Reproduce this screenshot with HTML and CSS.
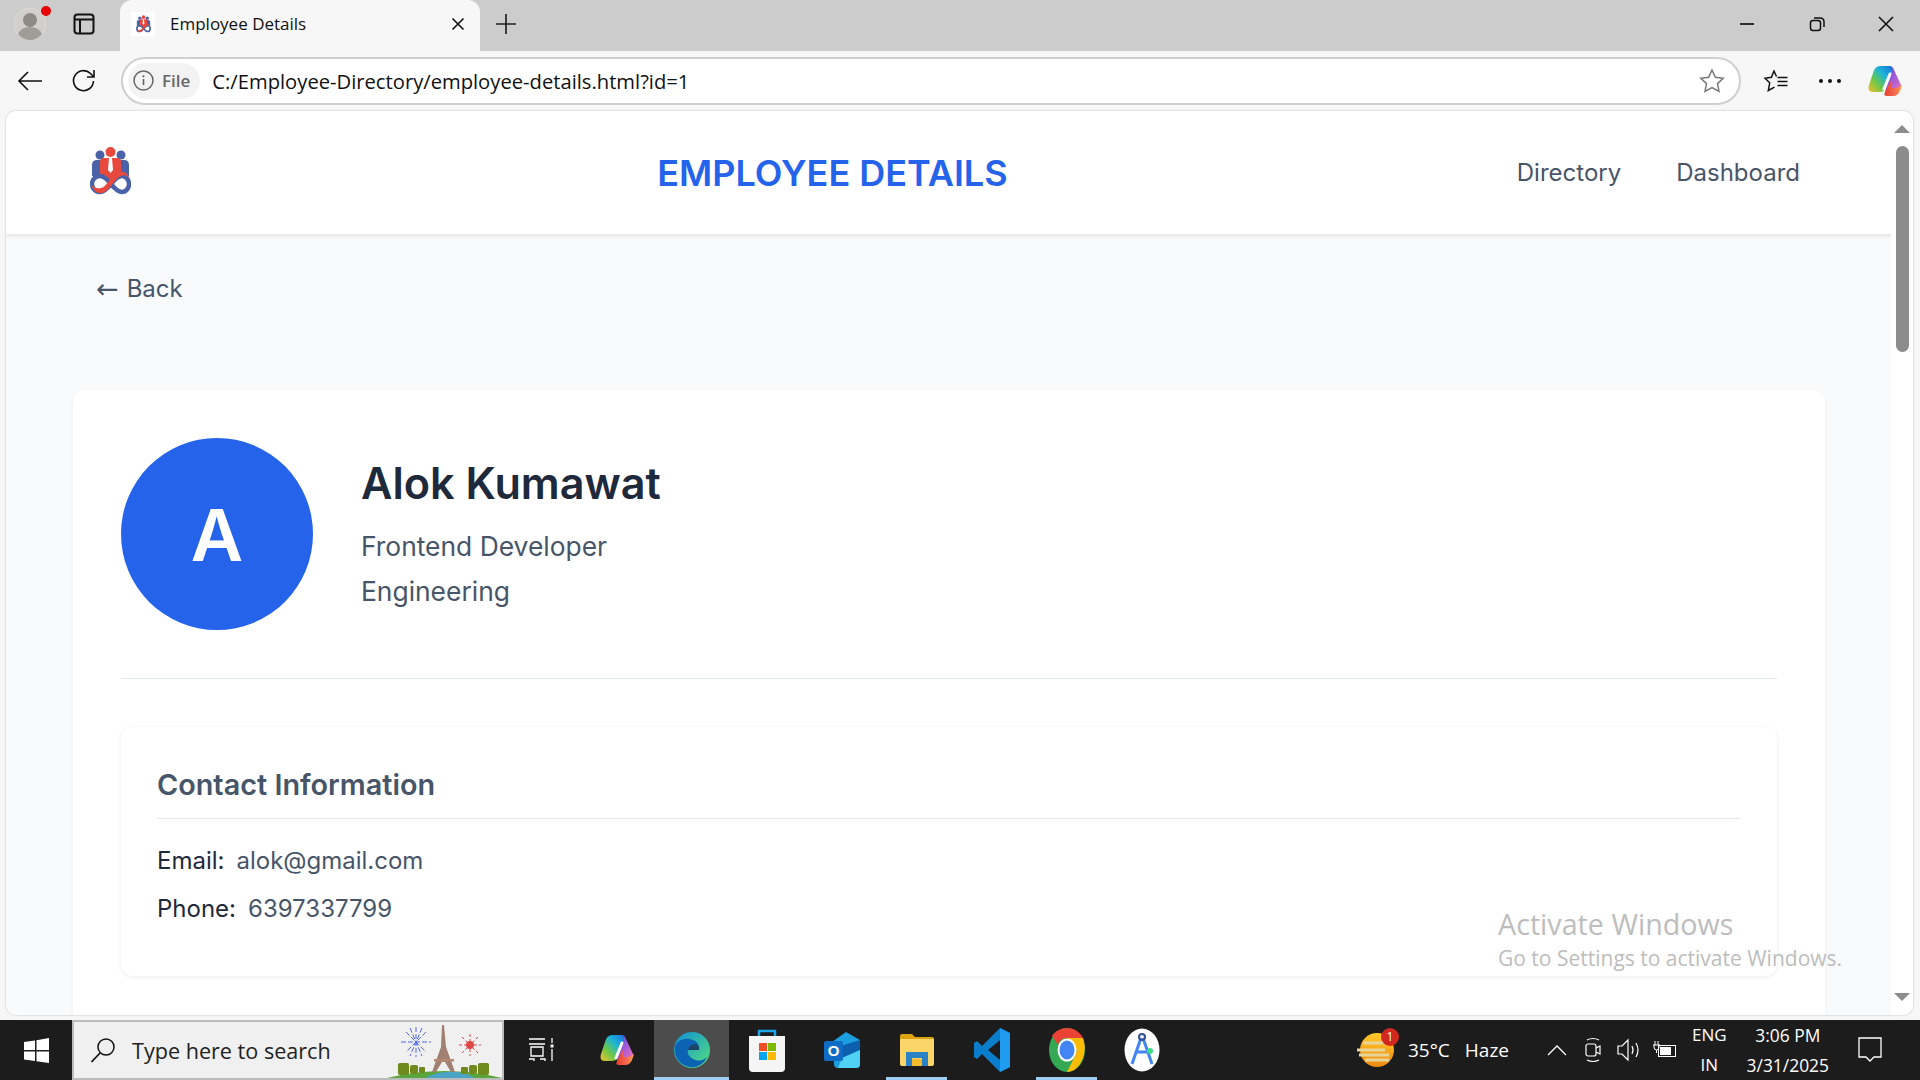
FILE: index.html
```html
<!DOCTYPE html>
<html lang="en">
<head>
  <meta charset="UTF-8">
  <meta name="viewport" content="width=device-width, initial-scale=1.0">
  <title>Employee Details</title>
  <link rel="stylesheet" href="styles.css">
</head>
<body>
  <svg class="defs" width="0" height="0">
    <defs>
      <symbol id="logo" viewBox="0 0 41 50">
        <circle cx="10" cy="9" r="4.500" fill="#4a63a8"/>
        <circle cx="31" cy="9" r="4.500" fill="#4a63a8"/>
        <path d="M2 30V19q0-5 5-5h6v18zM39 30V19q0-5-5-5h-6v18z" fill="#4a63a8"/>
        <circle cx="20.500" cy="6" r="5" fill="#e8493c"/>
        <path d="M10 30V16q0-4 4-4h13q4 0 4 4v12l-10 6z" fill="#e8493c"/>
        <path d="M19 12h3l1 12-2.500 3-2.500-3z" fill="#fff"/>
        <path d="M21 38c-4-5-7-8-11-8-5 0-8 4-8 8s3 8 8 8c4 0 7-3 11-8s7-8 11-8 7 4 7 8-3 8-7 8c-4 0-7-3-11-8z" fill="none" stroke="#4a63a8" stroke-width="4.500"/>
        <path d="M1 38c2 6 6 10 11 9 7-1 12-14 19-17 4-2 7 0 9 3-2-6-7-9-12-7-7 3-11 15-17 16-5 1-8-1-10-4z" fill="#e8493c"/>
      </symbol>
      <symbol id="copilot" viewBox="0 0 34 32">
        <defs>
          <linearGradient id="copA" x1="1" y1="0" x2="0" y2="1">
            <stop offset="0" stop-color="#1a6fe0"/>
            <stop offset=".35" stop-color="#1cb4d8"/>
            <stop offset=".65" stop-color="#6cc84a"/>
            <stop offset="1" stop-color="#f5c02a"/>
          </linearGradient>
          <linearGradient id="copB" x1="0" y1="0" x2="1" y2="1">
            <stop offset="0" stop-color="#2a50d8"/>
            <stop offset=".5" stop-color="#a458d8"/>
            <stop offset="1" stop-color="#e878b8"/>
          </linearGradient>
          <linearGradient id="copC" x1="0" y1="0" x2="1" y2="0">
            <stop offset="0" stop-color="#e8402c"/>
            <stop offset=".6" stop-color="#f46a50"/>
            <stop offset="1" stop-color="#fba84a"/>
          </linearGradient>
        </defs>
        <path d="M21 1q4 0 5 4l7 15q1 5-4 6h-7l-5 0 6-17q1-5-4-8z" fill="url(#copB)"/>
        <path d="M12 1h9q4 0 3 4L17 24q-1 3-5 3H5q-6 0-4-7L5 8q2-7 7-7z" fill="url(#copA)"/>
        <path d="M24 14l-7 13q-2 4 2 4h6q5 0 7-5l2-6-5 3h-6z" fill="url(#copC)"/>
        <path d="M22 9l-6 15" stroke="#fff" stroke-width="3" stroke-linecap="round"/>
      </symbol>
    </defs>
  </svg>

  <div class="tabbar">
    <div class="profile">
      <svg width="34" height="34" viewBox="0 0 34 34">
        <circle cx="17" cy="17" r="16" fill="#d2d0cc" stroke="#dedcd8"/>
        <circle cx="17" cy="13" r="7" fill="#8d8a85"/>
        <path d="M5 27q3-7 12-7t12 7q-5 6-12 6t-12-6z" fill="#a09d98"/>
      </svg>
      <span class="profile-dot"></span>
    </div>
    <div class="bar-btn">
      <svg width="22" height="22" viewBox="0 0 22 22" fill="none" stroke="#111" stroke-width="2">
        <rect x="1.500" y="1.500" width="19" height="19" rx="3"/>
        <path d="M1.500 6.500h19M7 6.500v14" />
      </svg>
    </div>
    <div class="tab">
      <span class="tab-fav"><svg width="15" height="18"><use href="#logo"/></svg></span>
      <span class="tab-title">Employee Details</span>
      <svg class="tab-close" width="14" height="14" viewBox="0 0 14 14" stroke="#111" stroke-width="1.600"><path d="M1.500 1.500l11 11M12.500 1.500l-11 11"/></svg>
    </div>
    <div class="bar-btn new-tab">
      <svg width="22" height="22" viewBox="0 0 22 22" stroke="#222" stroke-width="1.700"><path d="M11 1v20M1 11h20"/></svg>
    </div>
    <div class="win-btns">
      <svg width="16" height="16" viewBox="0 0 16 16" stroke="#111" stroke-width="1.700"><path d="M1 8h14"/></svg>
      <svg width="16" height="16" viewBox="0 0 16 16" fill="none" stroke="#111" stroke-width="1.500"><rect x="1.500" y="4.500" width="10" height="10" rx="2.500"/><path d="M5 2h6q4 0 4 4v5"/></svg>
      <svg width="16" height="16" viewBox="0 0 16 16" stroke="#111" stroke-width="1.600"><path d="M1 1l14 14M15 1L1 15"/></svg>
    </div>
  </div>

  <div class="toolbar">
    <svg class="tool-icon" width="26" height="22" viewBox="0 0 26 22" fill="none" stroke="#111" stroke-width="1.600"><path d="M25 11H2M11 2l-9 9 9 9"/></svg>
    <svg class="tool-icon" width="26" height="26" viewBox="0 0 26 26" fill="none" stroke="#111" stroke-width="1.600"><path d="M22.500 13a10 10 0 1 1-3-7.500l3 3M23 2v7h-7"/></svg>
    <div class="address">
      <span class="site-chip">
        <svg width="21" height="21" viewBox="0 0 21 21"><circle cx="10.500" cy="10.500" r="9.500" fill="none" stroke="#666" stroke-width="1.500"/><path d="M10.500 9v6" stroke="#666" stroke-width="1.600"/><circle cx="10.500" cy="6.300" r="1.100" fill="#666"/></svg>
        File
      </span>
      <span class="url">C:/Employee-Directory/employee-details.html?id=1</span>
      <svg class="star" width="26" height="25" viewBox="0 0 26 25" fill="none" stroke="#777" stroke-width="1.500"><path d="M13 2l3.400 7.200 7.800 1-5.700 5.400 1.500 7.800-7-3.900-7 3.900 1.500-7.800L1.800 10.200l7.800-1z"/></svg>
    </div>
    <svg class="fav-list" width="26" height="24" viewBox="0 0 26 24" fill="none" stroke="#111" stroke-width="1.500"><path d="M13.500 7.500L11 2 8.400 8.200 2 9.200l4.700 4.600-1.400 7.700 6.200-3.300"/><path d="M14.500 8.500h10M14.500 12.500h10M14.500 16.500h10"/></svg>
    <div class="dots"><i></i><i></i><i></i></div>
    <svg class="copilot-btn" width="34" height="32"><use href="#copilot"/></svg>
  </div>

  <div class="viewport">
    <div class="page">
      <header class="site-header">
        <div class="logo"><svg width="41" height="50"><use href="#logo"/></svg></div>
        <h1>EMPLOYEE DETAILS</h1>
        <nav class="nav">
          <a href="#">Directory</a>
          <a href="#">Dashboard</a>
        </nav>
      </header>
      <main class="content">
        <a class="back" href="#"><span class="back-arrow">←</span><span>Back</span></a>
        <section class="card">
          <div class="profile-head">
            <div class="avatar">A</div>
            <div class="profile-info">
              <h2>Alok Kumawat</h2>
              <p>Frontend Developer</p>
              <p>Engineering</p>
            </div>
          </div>
          <div class="info-box">
            <h3>Contact Information</h3>
            <div class="info-row"><span class="label">Email:</span><span>alok@gmail.com</span></div>
            <div class="info-row"><span class="label">Phone:</span><span>6397337799</span></div>
          </div>
        </section>
      </main>
    </div>
    <div class="scrollbar">
      <span class="arrow-up"></span>
      <span class="thumb"></span>
      <span class="arrow-down"></span>
    </div>
    <div class="watermark">
      <div class="wm-title">Activate Windows</div>
      <div class="wm-sub">Go to Settings to activate Windows.</div>
    </div>
  </div>

  <div class="taskbar">
    <div class="start">
      <svg width="25" height="25" viewBox="0 0 25 25" fill="#fff"><path d="M0 4l11-1.500V12H0zM12.500 2.200L25 0v12H12.500zM0 13.500h11v9.500L0 21.500zM12.500 13.500H25V25l-12.500-1.800z"/></svg>
    </div>
    <div class="search">
      <svg width="26" height="26" viewBox="0 0 26 26" fill="none" stroke="#111" stroke-width="1.500"><circle cx="16" cy="10" r="8"/><path d="M10 16L1.500 25" stroke-width="1.800"/></svg>
      <span>Type here to search</span>
      <svg class="search-art" width="115" height="56" viewBox="0 0 115 56">
        <path d="M0 56q57-14 115 0z" fill="#5aa63c"/>
        <path d="M38 56q18-10 42-4l8 4z" fill="#4aa4c4"/>
        <path d="M55 3h2l2 22 9 25h-4l-6-10h-3l-6 10h-4l9-25z" fill="#a08072"/>
        <path d="M47 37h20v2.500H47z" fill="#b08a70"/>
        <g stroke="#5568e8" stroke-width="1" stroke-dasharray="5 2"><path d="M29 5v30M14 20h30M19 10l20 20M39 10L19 30M23 6l12 28M35 6L23 34"/></g>
        <g stroke="#e04848" stroke-width="1" stroke-dasharray="3 2"><path d="M83 12v22M72 23h22M75 15l16 16M91 15L75 31"/></g>
        <circle cx="83" cy="23" r="4" fill="#e04848"/>
        <g fill="#6f8a1c"><rect x="11" y="41" width="11" height="12" rx="2"/><rect x="23" y="43" width="8" height="9" rx="2"/><rect x="32" y="45" width="6" height="6" rx="1"/><rect x="74" y="45" width="7" height="7" rx="1"/><rect x="82" y="43" width="8" height="9" rx="2"/><rect x="91" y="41" width="11" height="12" rx="2"/></g>
      </svg>
    </div>
    <div class="task task-view">
      <svg width="28" height="28" viewBox="0 0 28 28" fill="none" stroke="#fff" stroke-width="1.300"><path d="M1 3h16M1 8h16M3 11h12v9H3zM1 23h5v2M12 23h5v2M24 2v5M24 13v12"/><rect x="22.500" y="8.500" width="3" height="3" fill="#fff" stroke="none"/></svg>
    </div>
    <div class="task"><svg width="34" height="32"><use href="#copilot"/></svg></div>
    <div class="task task-active">
      <svg width="36" height="36" viewBox="0 0 36 36">
        <defs>
          <linearGradient id="edgeA" x1="0" y1="0" x2="1" y2="1"><stop offset="0" stop-color="#0f8ed8"/><stop offset="1" stop-color="#56e07a"/></linearGradient>
        </defs>
        <circle cx="18" cy="18" r="18" fill="url(#edgeA)"/>
        <path d="M1 16c0-6 7-10 14-9 8 1 11 6 10 11H14c-1 3 1 7 5 9 6 3 11 1 14-2-3 7-10 11-17 10C7 34 0 26 1 16z" fill="#0c63b4"/>
        <path d="M14 18c1-4 4-6 7-6 3 1 5 3 4 6z" fill="#2a2a2a" opacity=".55"/>
      </svg>
    </div>
    <div class="task">
      <svg width="36" height="44" viewBox="0 0 36 44">
        <path d="M10 8V3h16v5" fill="none" stroke="#1ea7e8" stroke-width="2.500"/>
        <path d="M0 8h36v32q0 4-4 4H4q-4 0-4-4z" fill="#f5f5f5"/>
        <rect x="10" y="15" width="8" height="8" fill="#f25022"/><rect x="19" y="15" width="8" height="8" fill="#7fba00"/>
        <rect x="10" y="24" width="8" height="8" fill="#00a4ef"/><rect x="19" y="24" width="8" height="8" fill="#ffb900"/>
      </svg>
    </div>
    <div class="task">
      <svg width="36" height="36" viewBox="0 0 36 36">
        <path d="M8 10L22 0l14 8v24q0 4-4 4H14q-4 0-4-4z" fill="#1c9fe0"/>
        <path d="M10 16l26-8v10L18 26z" fill="#0c5fad"/>
        <path d="M18 26l18-8v14q0 4-4 4H14z" fill="#4fd2f5"/>
        <rect x="0" y="9" width="19" height="20" rx="2" fill="#0f6cc4"/>
        <text x="9.500" y="24" class="outlook-o">O</text>
      </svg>
    </div>
    <div class="task task-open">
      <svg width="34" height="32" viewBox="0 0 34 32">
        <path d="M0 2q0-2 2-2h10l3 3h17q2 0 2 2v4H0z" fill="#dca312"/>
        <path d="M0 5h34v25q0 2-2 2H2q-2 0-2-2z" fill="#fcd56a"/>
        <path d="M6 32V18h22v14h-6v-8H12v8z" fill="#2b82c6"/>
        <rect x="12" y="25" width="10" height="7" fill="#f5bb2b"/>
      </svg>
    </div>
    <div class="task">
      <svg width="36" height="44" viewBox="0 0 36 44">
        <path d="M26 0l10 5v34l-10 5L8 26 3 31l-3-2V15l3-2 5 5zM26 12L14 22l12 10z" fill="#0a7dcb"/>
        <path d="M26 0l10 5v34l-10 5z" fill="#1f9cf0"/>
      </svg>
    </div>
    <div class="task task-open">
      <svg width="36" height="44" viewBox="0 0 36 44">
        <ellipse cx="18" cy="22" rx="18" ry="22" fill="#34a853"/>
        <path d="M18 0c7 0 13 4 16 10H18c-5 0-8 3-9 7L3 8C6 3 12 0 18 0z" fill="#ea4335"/>
        <path d="M34 10c3 8 2 17-2 24-3 6-8 10-14 10l8-16c2-3 2-8-1-11-1-2-4-4-7-7z" fill="#fbbc05"/>
        <ellipse cx="18" cy="22" rx="9.500" ry="11.500" fill="#fff"/>
        <ellipse cx="18" cy="22" rx="7.500" ry="9.500" fill="#4285f4"/>
      </svg>
    </div>
    <div class="task">
      <svg width="36" height="44" viewBox="0 0 36 44">
        <ellipse cx="18" cy="22" rx="17.500" ry="21.500" fill="#fff"/>
        <g fill="none" stroke="#4285f4" stroke-width="3"><path d="M17 10L8 36M19 10l9 26M11 24h14"/></g>
        <circle cx="18" cy="9" r="3" fill="none" stroke="#33518f" stroke-width="2"/>
        <circle cx="26" cy="23" r="3" fill="#3ddc84"/>
      </svg>
    </div>
    <div class="tray">
      <div class="weather">
        <svg width="38" height="38" viewBox="0 0 38 38">
          <defs><linearGradient id="sun" x1="0" y1="0" x2="0" y2="1"><stop offset="0" stop-color="#ffc928"/><stop offset="1" stop-color="#f08a10"/></linearGradient></defs>
          <circle cx="20" cy="19" r="17" fill="url(#sun)"/>
          <path d="M6 12h22M0 19h28M2 24h30M8 29h24" stroke="#e8d59a" stroke-width="3"/>
        </svg>
        <span class="weather-badge">1</span>
      </div>
      <span class="weather-text">35°C</span>
      <span class="weather-text haze">Haze</span>
      <svg class="tray-chev" width="20" height="12" viewBox="0 0 20 12" fill="none" stroke="#fff" stroke-width="1.300"><path d="M1 11l9-9 9 9"/></svg>
      <svg class="tray-cam" width="18" height="26" viewBox="0 0 18 26" fill="none" stroke="#fff" stroke-width="1.200"><rect x="2" y="7" width="10" height="12" rx="2"/><path d="M12 11l4-2v8l-4-2M3 3q6-3 12 0M3 23q6 3 12 0"/></svg>
      <svg class="tray-vol" width="24" height="24" viewBox="0 0 24 24" fill="none" stroke="#fff" stroke-width="1.200"><path d="M1 8h4l6-6v20l-6-6H1zM15 8q2 4 0 8M19 5q4 7 0 14"/></svg>
      <svg class="tray-bat" width="24" height="20" viewBox="0 0 24 20"><rect x="5.500" y="5.500" width="17" height="11" fill="none" stroke="#fff"/><rect x="7" y="7" width="11" height="8" fill="#fff"/><path d="M0 5h7M1 5v2q0 3 2.500 3T6 7V5M2 1v4M5 1v4M3.500 10v3" fill="none" stroke="#fff"/></svg>
      <div class="lang"><span>ENG</span><span>IN</span></div>
      <div class="clock"><span>3:06 PM</span><span>3/31/2025</span></div>
      <svg class="notify" width="24" height="26" viewBox="0 0 24 26" fill="none" stroke="#fff" stroke-width="1.300"><path d="M1 1h22v19h-7l-4 4-4-4H1z"/></svg>
    </div>
  </div>
</body>
</html>
```

FILE: styles.css
```css
* {
  box-sizing: border-box;
}
html, body {
  margin: 0;
  height: 100%;
  overflow: hidden;
}
body {
  width: 1920px;
  height: 1080px;
  display: flex;
  flex-direction: column;
  background-color: #f7f7f7;
  font-family: "Open Sans", "Noto Sans", sans-serif;
  color: #111;
}
.defs {
  position: absolute;
}

/* browser chrome */
.tabbar {
  height: 51px;
  padding-bottom: 4px;
  display: flex;
  align-items: center;
  background-color: #cccccc;
}
.profile {
  position: relative;
  width: 34px;
  height: 34px;
  margin-left: 13px;
}
.profile-dot {
  position: absolute;
  top: -1px;
  right: -4px;
  width: 10px;
  height: 10px;
  border-radius: 50%;
  background-color: #e60000;
}
.bar-btn {
  display: flex;
  margin-left: 26px;
}
.tab {
  width: 360px;
  height: 51px;
  margin: 0 0 -4px 25px;
  padding: 0 15px 4px 11px;
  display: flex;
  align-items: center;
  background-color: #f7f7f7;
  border-radius: 12px 12px 0 0;
}
.tab-fav {
  width: 24px;
  height: 24px;
  display: flex;
  align-items: center;
  justify-content: center;
  background-color: #fff;
}
.tab-title {
  margin-left: 15px;
  flex: 1;
  font-size: 17px;
}
.new-tab {
  margin-left: 15px;
}
.win-btns {
  margin-left: auto;
  width: 181px;
  padding-right: 26px;
  display: flex;
  justify-content: space-between;
}
.toolbar {
  height: 60px;
  display: flex;
  align-items: center;
  padding-bottom: 1px;
}
.tool-icon {
  margin-left: 17px;
}
.tool-icon + .tool-icon {
  margin-left: 28px;
}
.address {
  width: 1620px;
  height: 48px;
  margin-left: 24px;
  padding: 0 14px 0 5px;
  display: flex;
  align-items: center;
  background-color: #fff;
  border: 2px solid #cfcfcf;
  border-radius: 24px;
}
.site-chip {
  height: 36px;
  padding: 0 10px 0 5px;
  display: flex;
  align-items: center;
  gap: 8px;
  background-color: #f3f3f3;
  border-radius: 18px;
  font-size: 17px;
  font-weight: 600;
  color: #666;
}
.url {
  flex: 1;
  margin-left: 12px;
  font-size: 20.200px;
  color: #111;
}
.fav-list {
  margin-left: 22px;
}
.dots {
  margin-left: 30px;
  display: flex;
  gap: 5px;
}
.dots i {
  width: 4px;
  height: 4px;
  border-radius: 50%;
  background-color: #111;
}
.copilot-btn {
  margin-left: 27px;
}

/* page area */
.viewport {
  position: relative;
  flex: 1;
  min-height: 0;
  margin: 0 7px 5px 6px;
  display: flex;
  overflow: hidden;
  background-color: #fff;
  border-radius: 10px;
  box-shadow: 0 0 2px rgba(0, 0, 0, 0.3);
}
.page {
  flex: 1;
  overflow: hidden;
  background-color: #f8fafc;
  font-family: Inter, sans-serif;
}
.site-header {
  height: 123px;
  padding: 0 91px 0 66px;
  display: flex;
  align-items: center;
  justify-content: space-between;
  background-color: #fff;
  box-shadow: 0 2px 4px rgba(0, 0, 0, 0.1);
}
.logo {
  width: 76px;
  display: flex;
  justify-content: center;
  margin-top: -3px;
}
.site-header h1 {
  margin: 0;
  font-size: 36px;
  font-weight: 600;
  color: #2563eb;
}
.nav {
  display: flex;
  gap: 55px;
}
.nav a {
  font-size: 24px;
  color: #475569;
  text-decoration: none;
}
.content {
  padding: 40px 66px 0 67px;
}
.back {
  display: flex;
  align-items: center;
  gap: 8px;
  margin-left: 23px;
  height: 30px;
  line-height: 30px;
  font-size: 24px;
  color: #475569;
  text-decoration: none;
}
.back-arrow {
  font-family: "DejaVu Sans", sans-serif;
  font-size: 27px;
}
.card {
  margin-top: 86px;
  padding: 48px;
  background-color: #fff;
  border-radius: 12px;
  box-shadow: 0 1px 4px rgba(0, 0, 0, 0.05);
}
.profile-head {
  display: flex;
  align-items: center;
  gap: 48px;
  padding-bottom: 48px;
  border-bottom: 1px solid #e2e8f0;
}
.avatar {
  width: 192px;
  height: 192px;
  display: flex;
  align-items: center;
  justify-content: center;
  border-radius: 50%;
  background-color: #2563eb;
  color: #fff;
  font-size: 72px;
  font-weight: 600;
}
.profile-info h2 {
  margin: 0 0 12px;
  font-size: 43.200px;
  font-weight: 600;
  line-height: 65px;
  color: #1e293b;
}
.profile-info p {
  margin: 0 0 8px;
  font-size: 26.400px;
  line-height: 37px;
  color: #475569;
}
.info-box {
  margin-top: 48px;
  padding: 35px 36px 32px;
  height: 249px;
  background-color: #fff;
  border-radius: 12px;
  box-shadow: 0 1px 4px rgba(0, 0, 0, 0.08);
}
.info-box h3 {
  margin: 0 0 24px;
  padding-bottom: 10px;
  font-size: 28.800px;
  font-weight: 600;
  line-height: 46px;
  color: #475569;
  border-bottom: 1px solid #e2e8f0;
}
.info-row {
  display: flex;
  gap: 12px;
  margin-bottom: 13px;
  font-size: 24px;
  line-height: 35px;
  color: #475569;
}
.label {
  color: #1e293b;
}
.scrollbar {
  position: relative;
  width: 22px;
  background-color: #fff;
  display: flex;
  flex-direction: column;
  align-items: center;
}
.arrow-up, .arrow-down {
  width: 0;
  height: 0;
  border-left: 8px solid transparent;
  border-right: 8px solid transparent;
}
.arrow-up {
  margin-top: 14px;
  border-bottom: 8px solid #8c8c8c;
}
.thumb {
  width: 13px;
  height: 206px;
  margin-top: 13px;
  border-radius: 7px;
  background-color: #8c8c8c;
}
.arrow-down {
  margin-top: auto;
  margin-bottom: 14px;
  border-top: 8px solid #8c8c8c;
}
.watermark {
  position: absolute;
  left: 1492px;
  top: 792px;
  color: #bdbdbd;
  pointer-events: none;
}
.wm-title {
  font-size: 28.700px;
  line-height: 41px;
}
.wm-sub {
  font-size: 21px;
  line-height: 28px;
}

/* taskbar */
.taskbar {
  height: 60px;
  display: flex;
  align-items: stretch;
  background-color: #1c1c1c;
  color: #fff;
}
.start {
  width: 72px;
  display: flex;
  align-items: center;
  justify-content: center;
}
.search {
  position: relative;
  width: 432px;
  padding-left: 16px;
  display: flex;
  align-items: center;
  gap: 16px;
  background-color: #f0f0f0;
  border: 2px solid #bcbcbc;
  font-size: 21.600px;
  color: #222;
}
.search-art {
  position: absolute;
  right: 0;
  bottom: 0;
}
.task {
  position: relative;
  width: 75px;
  display: flex;
  align-items: center;
  justify-content: center;
}
.task-active {
  background-color: #4c4c4c;
}
.task-active::after, .task-open::after {
  content: "";
  position: absolute;
  bottom: 0;
  height: 3px;
  background-color: #9fcef5;
}
.task-active::after {
  left: 0;
  right: 0;
}
.task-open::after {
  left: 7px;
  right: 7px;
}
.outlook-o {
  font-family: "Liberation Sans", sans-serif;
  font-size: 15px;
  font-weight: 700;
  fill: #fff;
  text-anchor: middle;
}
.tray {
  flex: 1;
  display: flex;
  align-items: center;
  font-size: 19px;
}
.weather {
  position: relative;
  margin-left: 178px;
  display: flex;
}
.weather-badge {
  position: absolute;
  top: -3px;
  right: -4px;
  width: 18px;
  height: 18px;
  border-radius: 50%;
  background-color: #d0281f;
  font-size: 12px;
  line-height: 18px;
  text-align: center;
}
.weather-text {
  margin-left: 13px;
}
.weather-text.haze {
  margin-left: 15px;
}
.tray-chev {
  margin-left: 38px;
}
.tray-cam {
  margin-left: 17px;
}
.tray-vol {
  margin-left: 15px;
}
.tray-bat {
  margin-left: 12px;
}
.lang, .clock {
  display: flex;
  flex-direction: column;
  align-items: center;
  font-size: 17px;
  line-height: 30px;
}
.lang {
  margin-left: 15px;
}
.clock {
  margin-left: 20px;
  font-size: 17.400px;
}
.notify {
  margin-left: 29px;
}
```
